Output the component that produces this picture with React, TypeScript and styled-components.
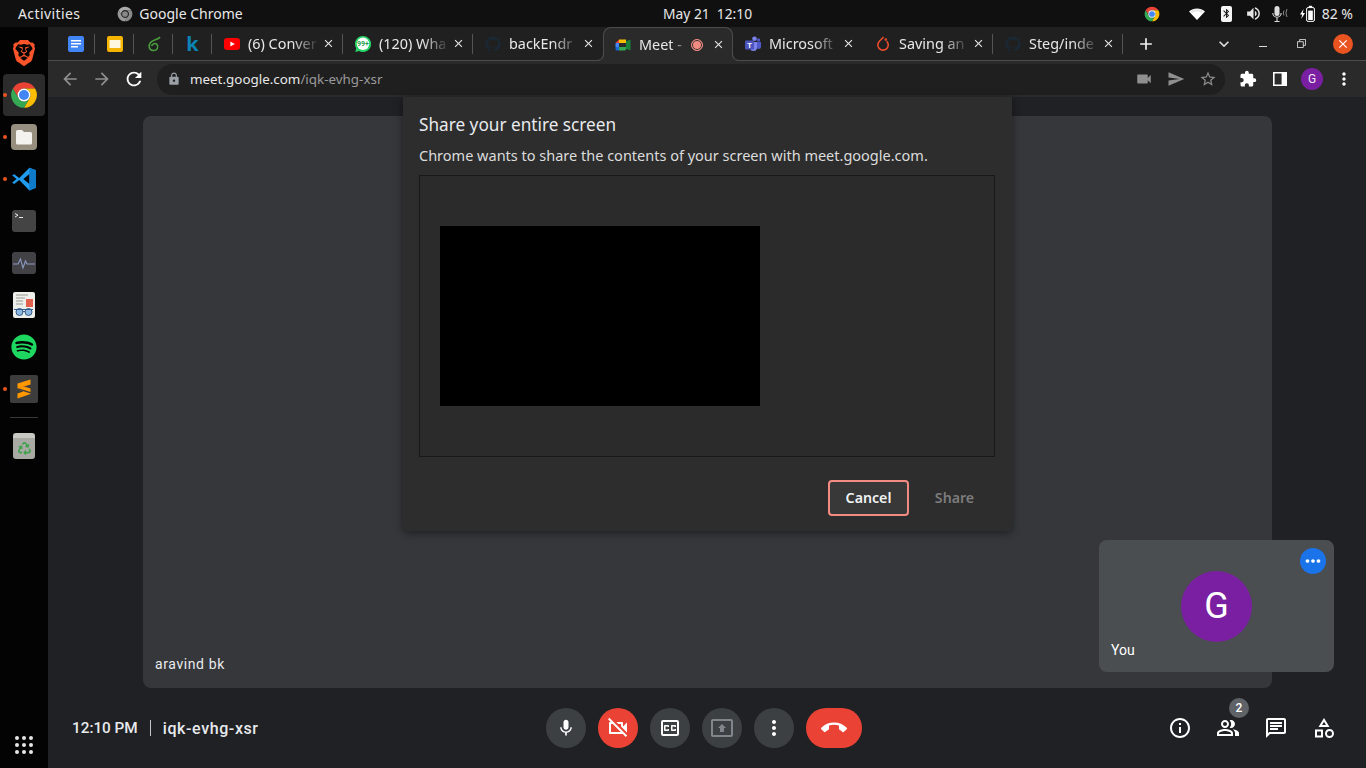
import React from 'react';
import styled, { createGlobalStyle } from 'styled-components';
import {
  MdArrowBack,
  MdArrowForward,
  MdBluetooth,
  MdCallEnd,
  MdClose,
  MdExpandMore,
  MdExtension,
  MdInfoOutline,
  MdLock,
  MdMic,
  MdMoreVert,
  MdOutlineCategory,
  MdOutlineChat,
  MdOutlineClosedCaption,
  MdOutlinePeopleAlt,
  MdOutlinePresentToAll,
  MdOutlineVideocamOff,
  MdRefresh,
  MdSend,
  MdStarBorder,
  MdVideocam,
  MdVolumeUp,
  MdAdd,
  MdMoreHoriz,
} from 'react-icons/md';
import { FaGithub, FaRecycle, FaSpotify } from 'react-icons/fa';
import { SiBrave } from 'react-icons/si';

const ChromeLogo: React.FC<{ size: number; grey?: boolean }> = ({ size, grey }) => (
  <svg width={size} height={size} viewBox="0 0 24 24">
    <path d="M2.47 6.5A11 11 0 0 1 21.53 6.5H12A5.5 5.5 0 0 0 7.24 14.75Z" fill={grey ? '#aaa' : '#ea4335'} />
    <path d="M21.53 6.5A11 11 0 0 1 12 23L16.76 14.75A5.5 5.5 0 0 0 12 6.5Z" fill={grey ? '#8a8a8a' : '#fbbc04'} />
    <path d="M12 23A11 11 0 0 1 2.47 6.5L7.24 14.75A5.5 5.5 0 0 0 16.76 14.75Z" fill={grey ? '#999' : '#34a853'} />
    <circle cx="12" cy="12" r="5.5" fill={grey ? '#222' : '#fff'} />
    <circle cx="12" cy="12" r="4.3" fill={grey ? '#888' : '#4285f4'} />
  </svg>
);

const DocsIcon = () => (
  <svg width="16" height="16" viewBox="0 0 16 16">
    <rect width="16" height="16" rx="2" fill="#4285f4" />
    <path d="M3 4h10v1.6H3zM3 7h10v1.6H3zM3 10h7v1.6H3z" fill="#fff" />
  </svg>
);

const SlidesIcon = () => (
  <svg width="16" height="16" viewBox="0 0 16 16">
    <rect width="16" height="16" rx="2" fill="#f4b400" />
    <rect x="2.5" y="4" width="11" height="8" fill="#fff7dd" />
  </svg>
);

const LeafIcon = () => (
  <svg width="16" height="16" viewBox="0 0 16 16" fill="none" stroke="#4a9d3c" strokeWidth="1.6">
    <path d="M14 1C12 4 7 3.5 4.5 6.5C2 9.5 3 14 7 14.5C11 15 13 11 11 8.5C9.5 6.8 6.5 7.5 5.5 10" />
  </svg>
);

const YoutubeIcon = () => (
  <svg width="16" height="12" viewBox="0 0 16 12">
    <rect width="16" height="12" rx="3" fill="#f00" />
    <path d="M6.4 3.4 10.8 6 6.4 8.6Z" fill="#fff" />
  </svg>
);

const WhatsappIcon = () => (
  <svg width="16" height="16" viewBox="0 0 16 16">
    <path d="M8 0a8 8 0 0 0-6.8 12.2L.3 16l3.9-1A8 8 0 1 0 8 0Z" fill="#25d366" />
    <circle cx="8" cy="7.8" r="6.2" fill="#fff" />
    <text x="8" y="10.3" fontSize="7" fontWeight="700" textAnchor="middle" fill="#1b9e4b" fontFamily="Roboto, sans-serif">
      99+
    </text>
  </svg>
);

const MeetIcon = () => (
  <svg width="16" height="16" viewBox="0 0 16 16">
    <path d="M4 2.5H11V6H4Z" fill="#fbbc04" />
    <path d="M4 2.5V6H.5Z" fill="#ea4335" />
    <path d="M.5 6H4V10H.5Z" fill="#4285f4" />
    <path d="M.5 10H4V13.5H2A1.5 1.5 0 0 1 .5 12Z" fill="#1967d2" />
    <path d="M4 10H11V12A1.5 1.5 0 0 1 9.5 13.5H4Z" fill="#34a853" />
    <path d="M11 4 15.5 2.8V13.2L11 12Z" fill="#188038" />
    <path d="M11 6H7.5V10H11Z" fill="#2a2a2a" />
  </svg>
);

const TeamsIcon = () => (
  <svg width="16" height="16" viewBox="0 0 16 16">
    <circle cx="9.5" cy="2.8" r="2.3" fill="#7b83eb" />
    <circle cx="13.5" cy="4" r="1.7" fill="#5059c9" />
    <path d="M11 6H16V10.5A2.5 2.5 0 0 1 11 10.5Z" fill="#5059c9" />
    <path d="M5 6H12V11.5A3.5 3.5 0 0 1 5 11.5Z" fill="#7b83eb" />
    <rect y="4.5" width="9" height="9" rx="1" fill="#4b53bc" />
    <text x="4.5" y="11.6" fontSize="7.5" fontWeight="700" textAnchor="middle" fill="#fff" fontFamily="Roboto, sans-serif">
      T
    </text>
  </svg>
);

const TorchIcon = () => (
  <svg width="16" height="16" viewBox="0 0 16 16" fill="none" stroke="#ee4c2c" strokeWidth="1.6">
    <path d="M8.6 1 4.4 5.2A5.2 5.2 0 1 0 11.7 5.2" />
    <circle cx="10.8" cy="3.6" r=".5" fill="#ee4c2c" />
  </svg>
);

const WifiIcon = () => (
  <svg width="16" height="14" viewBox="0 0 16 14">
    <path d="M0 4.5C4.4.5 11.6.5 16 4.5L8 13Z" fill="#fff" />
    <path d="M1.6 4.6C5.2 1.6 10.8 1.6 14.4 4.6L13 6C10 3.8 6 3.8 3 6Z" fill="#999" opacity=".25" />
  </svg>
);

const TrayMic = () => (
  <svg width="18" height="18" viewBox="0 0 18 18" fill="none">
    <rect x="3.5" y="1" width="5" height="10" rx="2.5" fill="#ddd" />
    <path d="M1.8 8A4.2 4.2 0 0 0 10.2 8M6 12.5V16M3.5 16.5H8.5" stroke="#ddd" strokeWidth="1.1" />
    <path d="M13 5.5Q11.6 8 13 10.5M16 4Q13.8 8 16 12" stroke="#888" />
  </svg>
);

const BatteryIcon = () => (
  <svg width="15" height="18" viewBox="0 0 15 18" fill="none">
    <path d="M3.6 4 0 9.5H2.2L1.2 14 5 8H2.8Z" fill="#fff" />
    <rect x="6.6" y="2.6" width="7.8" height="13.8" rx="1.4" stroke="#fff" />
    <rect x="8.8" y=".8" width="3.4" height="1.8" fill="#fff" />
    <rect x="8.2" y="5.6" width="4.6" height="9.4" fill="#fff" />
  </svg>
);

const SidePanelIcon = () => (
  <svg width="14" height="14" viewBox="0 0 14 14">
    <path d="M0 0H14V14H0ZM1.6 1.6V12.4H8.6V1.6Z" fill="#fff" fillRule="evenodd" />
  </svg>
);

const RestoreIcon = () => (
  <svg width="9" height="9" viewBox="0 0 10 10" fill="none" stroke="#ddd">
    <path d="M.5 3H7V9.5H.5Z M3 3V.5H9.5V7H7" />
  </svg>
);

const FolderIcon = () => (
  <svg width="26" height="26" viewBox="0 0 26 26">
    <rect width="26" height="26" rx="4" fill="#968f7f" />
    <path d="M5 7.5A1.5 1.5 0 0 1 6.5 6H11L13 8H19.5A1.5 1.5 0 0 1 21 9.5V19A1.5 1.5 0 0 1 19.5 20.5H6.5A1.5 1.5 0 0 1 5 19Z" fill="#f4f2ee" />
  </svg>
);

const VsCodeIcon = () => (
  <svg width="26" height="26" viewBox="0 0 24 24">
    <path d="M1 8.6 3 7.5 7.6 11 17 1.5 23 4V20L17 22.5 7.6 13 3 16.5 1 15.4 5 12Z M17 7.4 11.4 12 17 16.6Z" fill="#1f9cf0" fillRule="evenodd" />
    <path d="M17 1.5 23 4V20L17 22.5V16.6 7.4Z" fill="#0e7ac9" />
  </svg>
);

const TerminalIcon = () => (
  <svg width="24" height="22" viewBox="0 0 24 22">
    <rect width="24" height="22" rx="3" fill="#444" />
    <path d="M3 3.5 6 5.2 3 7M7 7.5H11" fill="none" stroke="#e8e8e8" strokeWidth="1" />
  </svg>
);

const MonitorIcon = () => (
  <svg width="24" height="22" viewBox="0 0 24 22">
    <rect width="24" height="22" rx="3" fill="#424246" />
    <path d="M1 12H6L8.5 7 11 16 13.5 9 15 12H23" fill="none" stroke="#8b98c0" strokeWidth="1.1" />
  </svg>
);

const ReaderIcon = () => (
  <svg width="22" height="26" viewBox="0 0 22 26">
    <rect width="22" height="26" rx="2" fill="#eeeeea" />
    <path d="M3 3H15M3 6H12M3 9H10M3 12H10" stroke="#9a9a92" strokeWidth="1" />
    <rect x="13" y="7" width="7" height="8" fill="#e2604c" />
    <circle cx="6.5" cy="20" r="3.5" fill="#8fb6dc" stroke="#345d8c" />
    <circle cx="15.5" cy="20" r="3.5" fill="#8fb6dc" stroke="#345d8c" />
    <path d="M10 19.5H12M1 17.5H20" stroke="#345d8c" />
  </svg>
);

const SublimeIcon = () => (
  <svg width="28" height="28" viewBox="0 0 28 28">
    <rect width="28" height="28" rx="2" fill="#3d3d3d" />
    <path d="M20.5 4.5V9.5L7.5 13.5V8.5ZM7.5 14.5 20.5 18.5V19L7.5 23.5V18.5L14 16.2Z" fill="#ff9800" />
    <path d="M7.5 13 20.5 17V13.5L14 11.4Z" fill="#ff9800" />
  </svg>
);

const App: React.FC = () => {
  return (
    <Screen>
      <GlobalStyle />
      <TopBar>
        <TopLeft>
          <Activities>Activities</Activities>
          <AppName>
            <ChromeLogo size={16} grey />
            Google Chrome
          </AppName>
        </TopLeft>
        <Clock>May 21&nbsp; 12:10</Clock>
        <Tray>
          <TrayChrome>
            <ChromeLogo size={16} />
          </TrayChrome>
          <TraySlot $w={27}>
            <WifiIcon />
          </TraySlot>
          <BluetoothBox>
            <MdBluetooth size={11} />
          </BluetoothBox>
          <TraySlot $w={27}>
            <MdVolumeUp size={17} />
          </TraySlot>
          <TraySlot $w={27}>
            <TrayMic />
          </TraySlot>
          <TraySlot $w={27}>
            <BatteryIcon />
          </TraySlot>
          <BatteryText>82 %</BatteryText>
        </Tray>
      </TopBar>

      <Desktop>
        <Dock>
          <DockItem>
            <SiBrave size={26} color="#fb542b" />
          </DockItem>
          <DockItem $active $running>
            <ChromeLogo size={28} />
          </DockItem>
          <DockItem $running>
            <FolderIcon />
          </DockItem>
          <DockItem $running>
            <VsCodeIcon />
          </DockItem>
          <DockItem>
            <TerminalIcon />
          </DockItem>
          <DockItem>
            <MonitorIcon />
          </DockItem>
          <DockItem>
            <ReaderIcon />
          </DockItem>
          <DockItem>
            <FaSpotify size={26} color="#1ed760" />
          </DockItem>
          <DockItem $running>
            <SublimeIcon />
          </DockItem>
          <DockRule />
          <DockItem>
            <TrashBox>
              <FaRecycle size={13} color="#3fa34d" />
            </TrashBox>
          </DockItem>
          <AppGrid>
            {Array.from({ length: 9 }).map((_, i) => (
              <i key={i} />
            ))}
          </AppGrid>
        </Dock>

        <Browser>
          <TabStrip>
            <Pinned $sep>
              <DocsIcon />
            </Pinned>
            <Pinned $sep>
              <SlidesIcon />
            </Pinned>
            <Pinned $sep>
              <LeafIcon />
            </Pinned>
            <Pinned $sep>
              <PinnedK>k</PinnedK>
            </Pinned>
            <Tab $sep $w={131}>
              <TabIcon>
                <YoutubeIcon />
              </TabIcon>
              <TabTitle>(6) Conver</TabTitle>
              <MdClose size={13} />
            </Tab>
            <Tab $sep>
              <TabIcon>
                <WhatsappIcon />
              </TabIcon>
              <TabTitle>(120) Wha</TabTitle>
              <MdClose size={13} />
            </Tab>
            <Tab>
              <TabIcon>
                <FaGithub size={16} color="#1b2733" />
              </TabIcon>
              <TabTitle>backEndr</TabTitle>
              <MdClose size={13} />
            </Tab>
            <ActiveTab>
              <TabIcon>
                <MeetIcon />
              </TabIcon>
              <TabTitle>Meet -</TabTitle>
              <RecordDot />
              <MdClose size={13} />
            </ActiveTab>
            <Tab>
              <TabIcon>
                <TeamsIcon />
              </TabIcon>
              <TabTitle>Microsoft</TabTitle>
              <MdClose size={13} />
            </Tab>
            <Tab $sep>
              <TabIcon>
                <TorchIcon />
              </TabIcon>
              <TabTitle>Saving an</TabTitle>
              <MdClose size={13} />
            </Tab>
            <Tab $sep>
              <TabIcon>
                <FaGithub size={16} color="#1b2733" />
              </TabIcon>
              <TabTitle>Steg/inde</TabTitle>
              <MdClose size={13} />
            </Tab>
            <NewTab>
              <MdAdd size={20} />
            </NewTab>
            <WindowControls>
              <WindowButton>
                <MdExpandMore size={20} />
              </WindowButton>
              <WindowButton>
                <Minimize />
              </WindowButton>
              <WindowButton>
                <RestoreIcon />
              </WindowButton>
              <CloseButton>
                <MdClose size={14} />
              </CloseButton>
            </WindowControls>
          </TabStrip>

          <Toolbar>
            <NavButton $dim>
              <MdArrowBack size={20} />
            </NavButton>
            <NavButton $dim>
              <MdArrowForward size={20} />
            </NavButton>
            <NavButton>
              <MdRefresh size={22} />
            </NavButton>
            <Omnibox>
              <MdLock size={14} color="#9aa0a6" />
              <Url>
                meet.google.com<UrlPath>/iqk-evhg-xsr</UrlPath>
              </Url>
              <OmniActions>
                <NavButton $dim>
                  <MdVideocam size={18} />
                </NavButton>
                <NavButton $dim>
                  <MdSend size={18} />
                </NavButton>
                <NavButton $dim>
                  <MdStarBorder size={18} />
                </NavButton>
              </OmniActions>
            </Omnibox>
            <NavButton>
              <MdExtension size={18} />
            </NavButton>
            <NavButton>
              <SidePanelIcon />
            </NavButton>
            <NavButton>
              <ToolbarAvatar>G</ToolbarAvatar>
            </NavButton>
            <NavButton>
              <MdMoreVert size={20} />
            </NavButton>
          </Toolbar>

          <MeetPage>
            <Stage>
              <StageName>aravind bk</StageName>
            </Stage>

            <BottomBar>
              <MeetingInfo>
                <MeetingTime>12:10 PM</MeetingTime>
                <InfoDivider />
                <MeetingCode>iqk-evhg-xsr</MeetingCode>
              </MeetingInfo>
              <CallControls>
                <RoundButton>
                  <MdMic size={20} />
                </RoundButton>
                <RoundButton $danger>
                  <MdOutlineVideocamOff size={24} />
                </RoundButton>
                <RoundButton>
                  <MdOutlineClosedCaption size={24} />
                </RoundButton>
                <RoundButton $dim>
                  <MdOutlinePresentToAll size={24} />
                </RoundButton>
                <RoundButton>
                  <MdMoreVert size={24} />
                </RoundButton>
                <RoundButton $danger $wide>
                  <MdCallEnd size={26} />
                </RoundButton>
              </CallControls>
              <SideActions>
                <SideButton>
                  <MdInfoOutline size={24} />
                </SideButton>
                <SideButton>
                  <MdOutlinePeopleAlt size={24} />
                  <CountBadge>2</CountBadge>
                </SideButton>
                <SideButton>
                  <MdOutlineChat size={24} />
                </SideButton>
                <SideButton>
                  <MdOutlineCategory size={24} />
                </SideButton>
              </SideActions>
            </BottomBar>

            <SelfTile>
              <MoreButton>
                <MdMoreHoriz size={22} />
              </MoreButton>
              <SelfAvatar>G</SelfAvatar>
              <SelfName>You</SelfName>
            </SelfTile>

            <ShareDialog>
              <DialogTitle>Share your entire screen</DialogTitle>
              <DialogText>Chrome wants to share the contents of your screen with meet.google.com.</DialogText>
              <PreviewFrame>
                <PreviewScreen />
              </PreviewFrame>
              <DialogActions>
                <CancelButton>Cancel</CancelButton>
                <ShareButton>Share</ShareButton>
              </DialogActions>
            </ShareDialog>
          </MeetPage>
        </Browser>
      </Desktop>
    </Screen>
  );
};

export default App;

const uiFont = `'Noto Sans', 'Open Sans', sans-serif`;

const GlobalStyle = createGlobalStyle`
  html, body {
    margin: 0;
    padding: 0;
    background: #000;
    overflow: hidden;
  }
  * {
    box-sizing: border-box;
  }
`;

const Screen = styled.div`
  width: 1366px;
  height: 768px;
  display: flex;
  flex-direction: column;
  overflow: hidden;
  font-family: ${uiFont};
`;

const TopBar = styled.header`
  height: 27px;
  flex: none;
  display: grid;
  grid-template-columns: 645px auto 1fr;
  align-items: center;
  padding-left: 18px;
  background: #101010;
  color: #e8e8e8;
  font-size: 14px;
`;

const TopLeft = styled.div`
  display: flex;
  align-items: center;
  gap: 37px;
`;

const Activities = styled.span`
  letter-spacing: 0.4px;
`;

const AppName = styled.span`
  display: flex;
  align-items: center;
  gap: 6px;
`;

const Clock = styled.span`
  font-size: 13.8px;
`;

const Tray = styled.div`
  display: flex;
  align-items: center;
  justify-content: flex-end;
  padding-right: 13px;
`;

const TrayChrome = styled.span`
  display: flex;
  margin-right: 24px;
`;

const TraySlot = styled.span<{ $w: number }>`
  width: ${(p) => p.$w}px;
  display: flex;
  align-items: center;
  justify-content: center;
  color: #e4e4e4;
`;

const BluetoothBox = styled.span`
  width: 11px;
  height: 16px;
  margin: 0 8px 0 10px;
  display: flex;
  align-items: center;
  justify-content: center;
  border-radius: 2px;
  background: #f4f4f4;
  color: #111;
`;

const BatteryText = styled.span`
  margin-left: 1px;
  font-size: 14px;
`;

const Desktop = styled.div`
  flex: 1;
  min-height: 0;
  display: flex;
`;

const Dock = styled.nav`
  width: 48px;
  flex: none;
  display: flex;
  flex-direction: column;
  align-items: center;
  padding-top: 5px;
  background: #030303;
`;

const DockItem = styled.div<{ $active?: boolean; $running?: boolean }>`
  position: relative;
  width: 42px;
  height: 42px;
  flex: none;
  display: flex;
  align-items: center;
  justify-content: center;
  border-radius: 4px;
  background: ${(p) => (p.$active ? '#2c2c2c' : 'transparent')};

  &::before {
    content: '';
    display: ${(p) => (p.$running ? 'block' : 'none')};
    position: absolute;
    left: 0;
    top: 19px;
    width: 4px;
    height: 4px;
    border-radius: 50%;
    background: #e95420;
  }
`;

const DockRule = styled.div`
  width: 28px;
  height: 15px;
  flex: none;
  margin-bottom: 0;
  background: linear-gradient(#3a3a3a, #3a3a3a) center 7px / 100% 1px no-repeat;
`;

const TrashBox = styled.div`
  width: 22px;
  height: 26px;
  display: flex;
  align-items: center;
  justify-content: center;
  padding-top: 5px;
  border-radius: 3px;
  background: linear-gradient(#c9c9c4 0 5px, #a9aaa4 5px);
`;

const AppGrid = styled.div`
  margin-top: auto;
  margin-bottom: 14px;
  display: grid;
  grid-template-columns: repeat(3, 4px);
  gap: 3px;

  i {
    height: 4px;
    border-radius: 50%;
    background: #e6e6e6;
  }
`;

const Browser = styled.main`
  flex: 1;
  min-width: 0;
  display: flex;
  flex-direction: column;
  background: #202124;
`;

const TabStrip = styled.div`
  height: 34px;
  flex: none;
  display: flex;
  align-items: stretch;
  padding-left: 8px;
  background: #202020;
  border-bottom: 1px solid #4c4c4c;
`;

const Pinned = styled.div<{ $sep?: boolean }>`
  position: relative;
  width: 39px;
  flex: none;
  display: flex;
  align-items: center;
  justify-content: center;

  &::after {
    content: '';
    display: ${(p) => (p.$sep ? 'block' : 'none')};
    position: absolute;
    right: 0;
    top: 7px;
    height: 20px;
    width: 1px;
    background: #555;
  }
`;

const PinnedK = styled.span`
  color: #0b84b5;
  font-size: 20px;
  font-weight: 700;
  line-height: 1;
`;

const Tab = styled.div<{ $sep?: boolean; $w?: number }>`
  position: relative;
  width: ${(p) => p.$w ?? 130}px;
  flex: none;
  display: flex;
  align-items: center;
  padding: 0 8px 0 12px;
  color: #e8e8e8;
  font-size: 14.4px;

  &::after {
    content: '';
    display: ${(p) => (p.$sep ? 'block' : 'none')};
    position: absolute;
    right: 0;
    top: 7px;
    height: 20px;
    width: 1px;
    background: #555;
  }
`;

const ActiveTab = styled(Tab)`
  height: 34px;
  margin-top: 0;
  background: #2a2a2a;
  border: 1px solid #4c4c4c;
  border-bottom: 0;
  border-radius: 8px 8px 0 0;
  padding: 0 7px 0 11px;

  &::before,
  &::after {
    content: '';
    display: block;
    position: absolute;
    bottom: 0;
    top: auto;
    width: 7px;
    height: 7px;
    background: transparent;
    border-bottom: 1px solid #4c4c4c;
  }
  &::before {
    left: -8px;
    border-right: 1px solid #4c4c4c;
    border-bottom-right-radius: 7px;
    box-shadow: 3px 3px 0 0 #2a2a2a;
  }
  &::after {
    right: -8px;
    border-left: 1px solid #4c4c4c;
    border-bottom-left-radius: 7px;
    box-shadow: -3px 3px 0 0 #2a2a2a;
  }
`;

const TabIcon = styled.span`
  width: 16px;
  height: 16px;
  flex: none;
  display: flex;
  align-items: center;
  justify-content: center;
  margin-right: 8px;
`;

const TabTitle = styled.span`
  flex: 1;
  min-width: 0;
  white-space: nowrap;
  -webkit-mask-image: linear-gradient(to right, #000 60%, rgba(0, 0, 0, 0.12) 92%);
  mask-image: linear-gradient(to right, #000 60%, rgba(0, 0, 0, 0.12) 92%);
`;

const RecordDot = styled.span`
  width: 12px;
  height: 12px;
  flex: none;
  margin: 0 9px 0 0;
  border-radius: 50%;
  background: #f28b82;
  border: 1px solid #f28b82;
  box-shadow: inset 0 0 0 1px #2a2a2a;
`;

const NewTab = styled.div`
  width: 46px;
  flex: none;
  display: flex;
  align-items: center;
  justify-content: center;
  color: #f1f1f1;
`;

const WindowControls = styled.div`
  margin-left: auto;
  display: flex;
  align-items: center;
  padding-right: 13px;
`;

const WindowButton = styled.div`
  width: 39px;
  height: 20px;
  display: flex;
  align-items: center;
  justify-content: center;
  color: #ddd;
`;

const Minimize = styled.span`
  width: 8px;
  height: 1px;
  margin-top: 6px;
  background: #ddd;
`;

const CloseButton = styled.div`
  width: 20px;
  height: 20px;
  margin-left: 12px;
  display: flex;
  align-items: center;
  justify-content: center;
  border-radius: 50%;
  background: #e95420;
  color: #fff;
`;

const Toolbar = styled.div`
  height: 36px;
  flex: none;
  display: flex;
  align-items: center;
  padding: 0 6px;
  background: #2a2a2a;
`;

const NavButton = styled.div<{ $dim?: boolean }>`
  width: 32px;
  height: 32px;
  flex: none;
  display: flex;
  align-items: center;
  justify-content: center;
  color: ${(p) => (p.$dim ? '#8f8f8f' : '#fff')};
`;

const Omnibox = styled.div`
  flex: 1;
  height: 31px;
  margin: 0 7px;
  display: flex;
  align-items: center;
  padding-left: 10px;
  border-radius: 16px;
  background: #1f1f1f;
`;

const Url = styled.span`
  margin-left: 9px;
  color: #e8e8e8;
  font-size: 13.4px;
`;

const UrlPath = styled.span`
  color: #9a9a9a;
`;

const OmniActions = styled.div`
  margin-left: auto;
  padding-right: 1px;
  display: flex;
  align-items: center;
`;

const ToolbarAvatar = styled.span`
  width: 22px;
  height: 22px;
  display: flex;
  align-items: center;
  justify-content: center;
  border-radius: 50%;
  background: #7b1fa2;
  color: #f4e6f7;
  font-size: 12px;
  font-family: Roboto, sans-serif;
`;

const MeetPage = styled.div`
  position: relative;
  flex: 1;
  min-height: 0;
  display: flex;
  flex-direction: column;
  background: #202124;
  font-family: Roboto, sans-serif;
`;

const Stage = styled.section`
  height: 572px;
  flex: none;
  margin: 19px 94px 0 95px;
  display: flex;
  align-items: flex-end;
  padding: 0 12px 16px;
  border-radius: 8px;
  background: #36373b;
`;

const StageName = styled.span`
  color: #e8eaed;
  font-size: 14px;
  letter-spacing: 0.6px;
  line-height: 16px;
`;

const BottomBar = styled.footer`
  flex: 1;
  display: grid;
  grid-template-columns: 498px auto 1fr;
  align-items: center;
`;

const MeetingInfo = styled.div`
  display: flex;
  align-items: center;
  padding-left: 24px;
  color: #e8eaed;
  font-size: 16px;
  font-weight: 500;
`;

const MeetingTime = styled.span`
  font-size: 15.3px;
`;

const MeetingCode = styled.span`
  letter-spacing: 0.6px;
`;

const InfoDivider = styled.span`
  width: 1px;
  height: 16px;
  margin: 0 12px 0 12px;
  background: #c4c7c5;
`;

const CallControls = styled.div`
  display: flex;
  gap: 12px;
`;

const RoundButton = styled.div<{ $danger?: boolean; $wide?: boolean; $dim?: boolean }>`
  width: ${(p) => (p.$wide ? 56 : 40)}px;
  height: 40px;
  display: flex;
  align-items: center;
  justify-content: center;
  border-radius: 20px;
  background: ${(p) => (p.$danger ? '#ea4335' : '#3c4043')};
  color: ${(p) => (p.$dim ? '#80868b' : '#fff')};
`;

const SideActions = styled.div`
  display: flex;
  justify-content: flex-end;
  padding-right: 18px;
`;

const SideButton = styled.div`
  position: relative;
  width: 48px;
  height: 40px;
  display: flex;
  align-items: center;
  justify-content: center;
  color: #fff;
`;

const CountBadge = styled.span`
  position: absolute;
  top: -10px;
  left: 25px;
  width: 20px;
  height: 20px;
  display: flex;
  align-items: center;
  justify-content: center;
  border-radius: 50%;
  background: #5f6368;
  color: #fff;
  font-size: 12px;
  font-weight: 500;
`;

const SelfTile = styled.div`
  position: absolute;
  right: 32px;
  bottom: 96px;
  width: 235px;
  height: 132px;
  display: flex;
  align-items: center;
  justify-content: center;
  border-radius: 8px;
  background: #4a4e51;
`;

const MoreButton = styled.span`
  position: absolute;
  top: 8px;
  right: 8px;
  width: 26px;
  height: 26px;
  display: flex;
  align-items: center;
  justify-content: center;
  border-radius: 50%;
  background: #1a73e8;
  color: #fff;
`;

const SelfAvatar = styled.span`
  width: 71px;
  height: 71px;
  display: flex;
  align-items: center;
  justify-content: center;
  border-radius: 50%;
  background: #7b1fa2;
  color: #fff;
  font-size: 36px;
`;

const SelfName = styled.span`
  position: absolute;
  left: 12px;
  bottom: 14px;
  color: #fff;
  font-size: 14px;
  line-height: 16px;
`;

const ShareDialog = styled.div`
  position: absolute;
  top: 0;
  left: 355px;
  width: 609px;
  height: 434px;
  display: flex;
  flex-direction: column;
  padding: 16px 17px 14px 16px;
  border-radius: 0 0 4px 4px;
  background: #2d2d2d;
  box-shadow: 0 2px 8px rgba(0, 0, 0, 0.45);
  font-family: ${uiFont};
`;

const DialogTitle = styled.h2`
  margin: 0;
  color: #e8eaed;
  font-size: 17.2px;
  font-weight: 400;
  line-height: 24px;
`;

const DialogText = styled.p`
  margin: 8px 0 0;
  color: #dcdcdc;
  font-size: 14.5px;
  line-height: 20px;
  white-space: nowrap;
`;

const PreviewFrame = styled.div`
  height: 282px;
  margin-top: 10px;
  padding: 50px 20px 0;
  border: 1px solid #181818;
  background: #2b2b2b;
`;

const PreviewScreen = styled.div`
  width: 320px;
  height: 180px;
  background: #000;
`;

const DialogActions = styled.div`
  display: flex;
  align-items: center;
  margin-top: 23px;
  padding-left: 409px;
`;

const CancelButton = styled.button`
  width: 81px;
  height: 36px;
  flex: none;
  padding: 0 0 2px;
  border: 2px solid #f28b82;
  border-radius: 4px;
  background: #383838;
  color: #f1f3f4;
  font: 600 14.2px ${uiFont};
`;

const ShareButton = styled.button`
  width: 91px;
  height: 36px;
  flex: none;
  padding: 0 0 2px;
  border: 0;
  background: transparent;
  color: #7c7c7c;
  font: 600 14.2px ${uiFont};
`;
